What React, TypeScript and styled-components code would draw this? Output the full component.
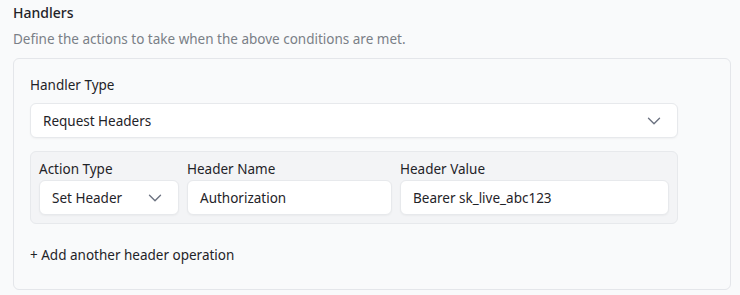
import React from "react";
import styled, { createGlobalStyle } from "styled-components";

const Global = createGlobalStyle`
  html, body { margin: 0; padding: 0; background: #f9fafb; }
  body { font-family: "Noto Sans", "Open Sans", sans-serif; color: #1f2328; }
  * { box-sizing: border-box; }
`;

const Page = styled.div`
  width: 740px;
  height: 295px;
  padding: 3px 9px 0 13px;
  background: #f9fafb;
`;

const Title = styled.div`
  font-size: 14px;
  line-height: 20px;
  font-weight: 500;
  color: #1f2328;
`;

const Desc = styled.div`
  margin-top: 6px;
  font-size: 13.5px;
  line-height: 20px;
  color: #7a7f87;
`;

const Card = styled.div`
  margin-top: 9px;
  border: 1px solid #e4e6ea;
  border-radius: 6px;
  background: #f9fafb;
  padding: 16px 16px 20px 16px;
  height: 232px;
`;

const Content = styled.div`
  width: 648px;
  display: flex;
  flex-direction: column;
`;

const Label = styled.div`
  font-size: 13.5px;
  line-height: 20px;
  color: #1f2328;
`;

const SelectBox = styled.div<{ $w?: number; $mt?: number }>`
  display: flex;
  align-items: center;
  justify-content: space-between;
  height: 35px;
  ${(p) => (p.$w ? `width: ${p.$w}px;` : "")}
  margin-top: ${(p) => p.$mt ?? 0}px;
  background: #fff;
  border: 1px solid #e7e9ec;
  border-radius: 6px;
  box-shadow: 0 1px 2px rgba(0, 0, 0, 0.04);
  padding: 0 12px 0 12px;
  font-size: 13.5px;
  color: #1f2328;
`;

const InputBox = styled.div<{ $w: number }>`
  display: flex;
  align-items: center;
  height: 35px;
  width: ${(p) => p.$w}px;
  background: #fff;
  border: 1px solid #e7e9ec;
  border-radius: 6px;
  box-shadow: 0 1px 2px rgba(0, 0, 0, 0.04);
  padding: 0 12px;
  font-size: 13.5px;
  color: #1f2328;
`;

const Group = styled.div`
  margin-top: 13px;
  background: #f3f4f6;
  border: 1px solid #e7e9ec;
  border-radius: 6px;
  padding: 7px 8px 8px 8px;
  display: flex;
  gap: 8px;
`;

const Field = styled.div`
  display: flex;
  flex-direction: column;
  gap: 1px;
`;

const AddButton = styled.button`
  margin-top: 21px;
  align-self: flex-start;
  border: none;
  background: transparent;
  padding: 0;
  font-family: inherit;
  font-size: 13.5px;
  line-height: 20px;
  color: #1f2328;
  cursor: pointer;
`;

const Chevron = () => (
  <svg width="22" height="22" viewBox="0 0 24 24" fill="none" stroke="#6b7280" strokeWidth="1.5" strokeLinecap="round" strokeLinejoin="round">
    <path d="m6 9 6 6 6-6" />
  </svg>
);

export default function App() {
  return (
    <>
      <Global />
      <Page>
        <Title>Handlers</Title>
        <Desc>Define the actions to take when the above conditions are met.</Desc>
        <Card>
          <Content>
            <Label>Handler Type</Label>
            <SelectBox $mt={8}>
              <span>Request Headers</span>
              <Chevron />
            </SelectBox>
            <Group>
              <Field>
                <Label>Action Type</Label>
                <SelectBox $w={140}>
                  <span>Set Header</span>
                  <Chevron />
                </SelectBox>
              </Field>
              <Field>
                <Label>Header Name</Label>
                <InputBox $w={205}>Authorization</InputBox>
              </Field>
              <Field>
                <Label>Header Value</Label>
                <InputBox $w={269}>Bearer sk_live_abc123</InputBox>
              </Field>
            </Group>
            <AddButton>+ Add another header operation</AddButton>
          </Content>
        </Card>
      </Page>
    </>
  );
}
